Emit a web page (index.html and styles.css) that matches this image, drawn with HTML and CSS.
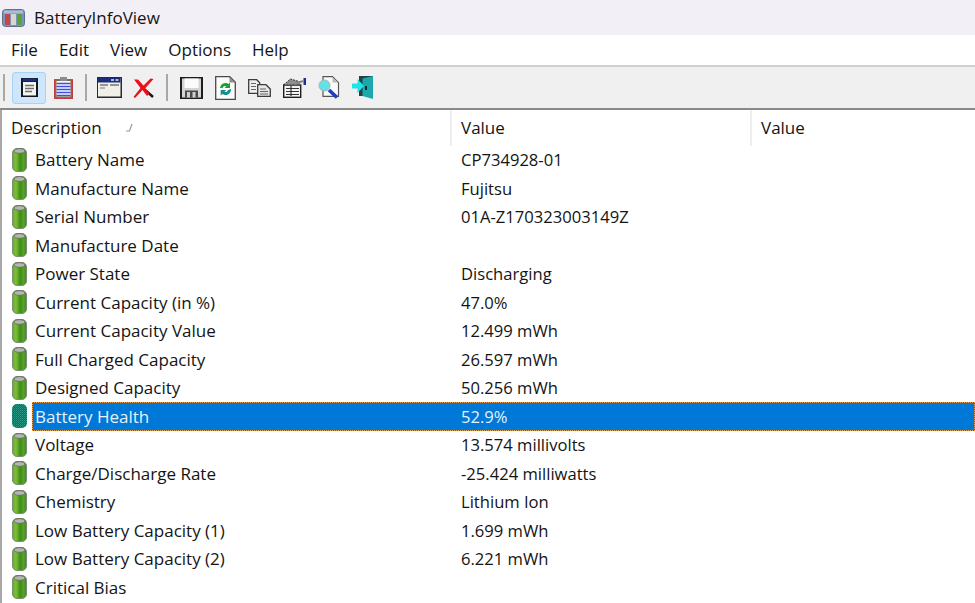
FILE: index.html
```html
<!DOCTYPE html>
<html lang="en">
<head>
  <meta charset="UTF-8">
  <title>BatteryInfoView</title>
  <link rel="stylesheet" href="styles.css">
</head>
<body>

<svg class="sprites" width="0" height="0">
  <defs>
    <linearGradient id="cell" x1="0" x2="1" y1="0" y2="0">
      <stop offset="0" stop-color="#6aa83a"/>
      <stop offset="0.25" stop-color="#7dc034"/>
      <stop offset="0.55" stop-color="#3c8c18"/>
      <stop offset="0.8" stop-color="#56a428"/>
      <stop offset="1" stop-color="#4a7a30"/>
    </linearGradient>
    <pattern id="dither" width="2" height="2" patternUnits="userSpaceOnUse">
      <rect width="2" height="2" fill="#0a62ad"/>
      <rect width="1" height="1" fill="#2f9a86"/>
      <rect x="1" y="1" width="1" height="1" fill="#1f7fb0"/>
    </pattern>
    <symbol id="battery" viewBox="0 0 15 24">
      <rect x="0.500" y="0.500" width="14" height="23" rx="4.500" fill="url(#cell)" stroke="#7c8f70"/>
      <ellipse cx="7.500" cy="3" rx="5.500" ry="2.300" fill="#b4b7b0" stroke="#62685e" stroke-width="0.800"/>
    </symbol>
    <symbol id="battery-sel" viewBox="0 0 15 24">
      <rect x="0" y="0" width="15" height="24" rx="5" fill="url(#dither)"/>
    </symbol>
  </defs>
</svg>

<div class="title-bar">
  <svg class="app-icon" width="23" height="18" viewBox="0 0 23 18">
    <rect x="0.500" y="0.500" width="22" height="17" rx="3" fill="#7f93b8" stroke="#5c6f92"/>
    <rect x="2" y="1.500" width="19" height="3" fill="#a9bcdc"/>
    <rect x="3" y="5" width="5" height="11" fill="#c8483f"/>
    <rect x="9" y="5" width="5" height="11" fill="#d9d6d0"/>
    <rect x="15" y="5" width="5" height="11" fill="#57a534"/>
  </svg>
  <span>BatteryInfoView</span>
</div>

<div class="menu-bar">
  <span>File</span>
  <span>Edit</span>
  <span>View</span>
  <span>Options</span>
  <span>Help</span>
</div>

<div class="toolbar">
  <i class="sep first"></i>
  <button class="tool active">
    <svg width="17" height="19" viewBox="0 0 17 19"><rect width="17" height="19" fill="#15151c"/><rect x="1.500" y="0.500" width="14" height="3" fill="#1d2f80"/><rect x="2" y="4" width="13" height="13.500" fill="#f4f4f0"/><path d="M4 7.500h9M4 10.500h9M4 13.500h7" stroke="#6e6e6e" stroke-width="1.500"/></svg>
  </button>
  <button class="tool">
    <svg width="19" height="22" viewBox="0 0 19 22"><rect y="2" width="19" height="20" fill="#8f6b3c"/><path d="M0.500 3v18.500h18V3" fill="none" stroke="#b3342c" stroke-dasharray="1 1"/><rect x="2.500" y="4" width="14" height="15.500" fill="#f6f6ff"/><path d="M2.500 6.500h14M2.500 9.500h14M2.500 12.500h14M2.500 15.500h14M2.500 18.500h14" stroke="#3e4fe6" stroke-width="1.600"/><rect x="6" y="0" width="7" height="4" fill="#8a8f86"/></svg>
  </button>
  <i class="sep mid"></i>
  <button class="tool">
    <svg width="25" height="21" viewBox="0 0 25 21"><rect width="25" height="21" fill="#2b2b2b"/><rect x="1" y="1" width="22.500" height="18.500" fill="#f0f0e8"/><rect x="1" y="1" width="22.500" height="4.500" fill="#1d2d7c"/><path d="M14 3h3M18.500 3h3" stroke="#dfe3f2" stroke-width="1.400"/><path d="M3 8h8M13 8h9" stroke="#777" stroke-width="1.600"/><path d="M3 11h5" stroke="#999" stroke-width="1.400"/></svg>
  </button>
  <button class="tool">
    <svg width="22" height="20" viewBox="0 0 22 20"><path d="M11 11l9 8" stroke="#2a1010" stroke-width="2.400"/><path d="M1 1.500l4 0 5.500 6 7-7 3 .5-8.500 9.500 4.500 5-2.500 2.500-4.500-6-7.500 8-1.500-1 7-9z" fill="#ea1119"/></svg>
  </button>
  <i class="sep last"></i>
  <button class="tool">
    <svg width="23" height="22" viewBox="0 0 23 22"><rect width="23" height="22" fill="#1e1e1e"/><rect x="2" y="1.500" width="19" height="19" fill="#d4d4d4"/><rect x="4.500" y="1.500" width="14" height="9.500" fill="#fbfbfb"/><rect x="5" y="13.500" width="13" height="7" fill="#4a4a4a"/><rect x="7" y="15" width="3" height="5.500" fill="#cfcfcf"/><rect x="12.500" y="15" width="3" height="5.500" fill="#cfcfcf"/></svg>
  </button>
  <button class="tool">
    <svg width="21" height="24" viewBox="0 0 21 24"><path d="M0.700 0.700h14l5.600 5.600v17h-19.600z" fill="#fbfbfb" stroke="#4a4a4a" stroke-width="1.300"/><path d="M14.500 1v5.500h5.500z" fill="#8c8c8c"/><path d="M5 12a5.500 5.500 0 0 1 8.500-4l1.500-1.500v5.500h-5.500l1.800-1.800a3 3 0 0 0-3.800 1.800z" fill="#1aa12e"/><path d="M16 13a5.500 5.500 0 0 1-8.500 5l-1.800 1.500v-5.500h5.500l-1.800 1.800a3 3 0 0 0 3.800-1.800z" fill="#14908c"/></svg>
  </button>
  <button class="tool">
    <svg width="23" height="18" viewBox="0 0 23 18"><path d="M0.700 0.700h8l3 3v10.600h-11z" fill="#f0f0f0" stroke="#3c3c3c" stroke-width="1.300"/><path d="M9.700 5.700h8.300l4.300 4.300v7.300h-12.600z" fill="#e6e6e6" stroke="#3c3c3c" stroke-width="1.300"/><path d="M3 4.500h5M3 7.500h5M3 10.500h5M12 10h6M12 12.500h8M12 15h8" stroke="#666" stroke-width="1.200"/></svg>
  </button>
  <button class="tool">
    <svg width="23" height="20" viewBox="0 0 23 20"><rect x="0.700" y="7" width="17" height="12.300" fill="#f4f4f4" stroke="#1e1e1e" stroke-width="1.400"/><path d="M0.500 7l7-6 10 3-3 3z" fill="#8f8f8f" stroke="#333" stroke-dasharray="2 1"/><path d="M3 10.500h13M3 13.500h13M3 16.500h13M8 8v10" stroke="#333" stroke-width="1.200"/><path d="M12 6l8-3" stroke="#888" stroke-width="2.200"/><rect x="20.500" y="0" width="2.500" height="7" fill="#1b2d96"/></svg>
  </button>
  <button class="tool">
    <svg width="22" height="23" viewBox="0 0 22 23"><path d="M5 .700h9.500l6 6v13.600h-15.500z" fill="#fbfbfb" stroke="#555" stroke-width="1.200"/><path d="M14.500 1v5.500h5.500z" fill="#bbb"/><path d="M11 14l8 7.500" stroke="#1b3dcc" stroke-width="3.600"/><circle cx="6.500" cy="9.500" r="5.500" fill="#62e2e6" stroke="#a5b5b8"/></svg>
  </button>
  <button class="tool">
    <svg width="21" height="23" viewBox="0 0 21 23"><path d="M7 0h14v20H7z" fill="#25413f"/><path d="M10.500 2.500l10.500-2.500v23l-10.500-3z" fill="#1aa8ac"/><rect x="13" y="10" width="2" height="4" fill="#0b2a2a"/><path d="M0 7.500h5.500v-4.500l6.500 7-6.500 7v-4.500h-5.500z" fill="#22e2e6"/></svg>
  </button>
</div>

<div class="list">
  <div class="list-head">
    <div class="col col-a">Description
      <svg class="sort" width="8" height="9" viewBox="0 0 8 9"><path d="M1 8h3.500L7 1" fill="none" stroke="#9a9a9a" stroke-width="1.200"/></svg>
    </div>
    <div class="col col-b">Value</div>
    <div class="col col-c">Value</div>
  </div>

  <div class="row"><svg class="cell-icon"><use href="#battery"/></svg><div class="cells"><div class="name">Battery Name</div><div class="val">CP734928-01</div></div></div>
  <div class="row"><svg class="cell-icon"><use href="#battery"/></svg><div class="cells"><div class="name">Manufacture Name</div><div class="val">Fujitsu</div></div></div>
  <div class="row"><svg class="cell-icon"><use href="#battery"/></svg><div class="cells"><div class="name">Serial Number</div><div class="val">01A-Z170323003149Z</div></div></div>
  <div class="row"><svg class="cell-icon"><use href="#battery"/></svg><div class="cells"><div class="name">Manufacture Date</div><div class="val"></div></div></div>
  <div class="row"><svg class="cell-icon"><use href="#battery"/></svg><div class="cells"><div class="name">Power State</div><div class="val">Discharging</div></div></div>
  <div class="row"><svg class="cell-icon"><use href="#battery"/></svg><div class="cells"><div class="name">Current Capacity (in %)</div><div class="val">47.0%</div></div></div>
  <div class="row"><svg class="cell-icon"><use href="#battery"/></svg><div class="cells"><div class="name">Current Capacity Value</div><div class="val">12.499 mWh</div></div></div>
  <div class="row"><svg class="cell-icon"><use href="#battery"/></svg><div class="cells"><div class="name">Full Charged Capacity</div><div class="val">26.597 mWh</div></div></div>
  <div class="row"><svg class="cell-icon"><use href="#battery"/></svg><div class="cells"><div class="name">Designed Capacity</div><div class="val">50.256 mWh</div></div></div>
  <div class="row selected"><svg class="cell-icon"><use href="#battery-sel"/></svg><div class="cells"><div class="name">Battery Health</div><div class="val">52.9%</div></div></div>
  <div class="row"><svg class="cell-icon"><use href="#battery"/></svg><div class="cells"><div class="name">Voltage</div><div class="val">13.574 millivolts</div></div></div>
  <div class="row"><svg class="cell-icon"><use href="#battery"/></svg><div class="cells"><div class="name">Charge/Discharge Rate</div><div class="val">-25.424 milliwatts</div></div></div>
  <div class="row"><svg class="cell-icon"><use href="#battery"/></svg><div class="cells"><div class="name">Chemistry</div><div class="val">Lithium Ion</div></div></div>
  <div class="row"><svg class="cell-icon"><use href="#battery"/></svg><div class="cells"><div class="name">Low Battery Capacity (1)</div><div class="val">1.699 mWh</div></div></div>
  <div class="row"><svg class="cell-icon"><use href="#battery"/></svg><div class="cells"><div class="name">Low Battery Capacity (2)</div><div class="val">6.221 mWh</div></div></div>
  <div class="row"><svg class="cell-icon"><use href="#battery"/></svg><div class="cells"><div class="name">Critical Bias</div><div class="val"></div></div></div>
</div>

</body>
</html>
```

FILE: styles.css
```css
html, body {
  margin: 0;
  height: 100%;
  overflow: hidden;
}

body {
  display: flex;
  flex-direction: column;
  font-family: "Open Sans", "Noto Sans", sans-serif;
  font-size: 17px;
  color: #141414;
  background-color: white;
}

.sprites {
  display: block;
  flex: none;
  height: 0;
}

.title-bar {
  flex: none;
  height: 35px;
  display: flex;
  align-items: center;
  padding-left: 2px;
  gap: 9px;
  background-color: #f3eff6;
}

.menu-bar {
  flex: none;
  height: 28px;
  padding-bottom: 2px;
  display: flex;
  align-items: center;
  gap: 21px;
  padding-left: 11px;
  background-color: white;
  border-bottom: 2px solid #d0d0d0;
}

.toolbar {
  flex: none;
  height: 41px;
  display: flex;
  align-items: center;
  padding-left: 3px;
  background-color: #f0f0f0;
  border-bottom: 2px solid #8a8a8a;
}

.sep {
  flex: none;
  width: 2px;
  height: 27px;
  background-color: #a8a8a8;
}

.sep.first {
  margin-right: 7px;
}

.sep.mid {
  margin: 0 6px 0 4px;
}

.sep.last {
  margin: 0 6px 0 5px;
}

.tool {
  flex: none;
  width: 34.3px;
  height: 32px;
  padding: 0;
  border: 1px solid transparent;
  background: none;
  display: flex;
  align-items: center;
  justify-content: center;
}

.tool.active {
  background-color: #cde6fb;
  border: 1px solid #a5d2f5;
  border-radius: 3px;
}

.list {
  flex: 1;
  min-height: 0;
  overflow: hidden;
  border-left: 2px solid #a8a8a8;
}

.list-head {
  height: 35.5px;
  display: flex;
}

.col {
  box-sizing: border-box;
  height: 100%;
  padding: 0 0 1px 9px;
  display: flex;
  align-items: center;
}

.col-a {
  width: 450px;
  border-right: 2px solid #eeeeee;
}

.col-b {
  width: 300px;
  border-right: 2px solid #eeeeee;
}

.sort {
  margin-left: 23px;
}

.row {
  height: 28.5px;
  display: flex;
  align-items: center;
}

.cell-icon {
  width: 15px;
  height: 24px;
  margin-left: 10px;
  flex: none;
}

.cells {
  flex: 1;
  height: 100%;
  margin-left: 5px;
  display: flex;
  align-items: center;
}

.name {
  box-sizing: border-box;
  width: 420px;
  padding-left: 3px;
}

.val {
  padding-left: 9px;
  font-size: 16.6px;
}

.row.selected .cells {
  background-color: #0078d7;
  color: #e6f2fb;
  outline: 1px dotted #e8a050;
  outline-offset: -1px;
}
```
